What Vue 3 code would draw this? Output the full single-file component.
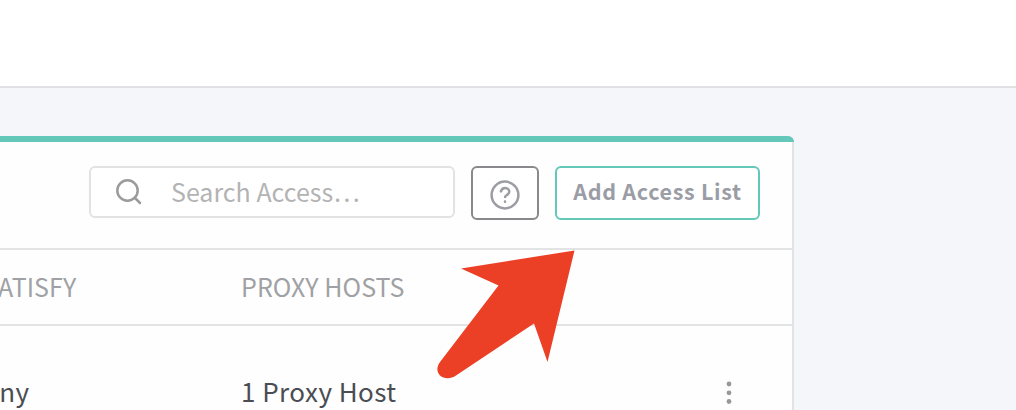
<script setup>
const title = 'Add Access List'
const row = { satisfy: 'Any', hosts: '1 Proxy Host' }
</script>

<template>
  <div class="page">
    <header class="navbar"></header>
    <main class="card">
      <div class="status"></div>
      <div class="toolbar">
        <div class="search">
          <svg class="search-icon" width="26" height="26" viewBox="0 0 26 26">
            <circle cx="11.5" cy="11.5" r="10.2" />
            <path d="M19 19l5 5" />
          </svg>
          <span class="placeholder">Search Access…</span>
        </div>
        <button class="btn help" aria-label="Help">
          <svg width="30" height="30" viewBox="0 0 30 30">
            <circle cx="15" cy="15" r="13.4" />
            <path d="M10.9 11.400c.7-2.4 2.4-3.6 4.4-3.5 2.3.1 4 1.800 4 3.900 0 2.8-4.2 3.300-4.2 5.300" />
            <path d="M15 21.6v.2" />
          </svg>
        </button>
        <button class="btn add">{{ title }}</button>
      </div>
      <div class="row head">
        <div class="cell satisfy"><span>SATISFY</span></div>
        <div class="cell hosts"><span>PROXY HOSTS</span></div>
      </div>
      <div class="row body">
        <div class="cell satisfy"><span>{{ row.satisfy }}</span></div>
        <div class="cell hosts"><span>{{ row.hosts }}</span></div>
        <svg class="more" width="6" height="24" viewBox="0 0 6 24">
          <circle cx="3" cy="3" r="2.4" />
          <circle cx="3" cy="11.800" r="2.4" />
          <circle cx="3" cy="20.500" r="2.4" />
        </svg>
      </div>
    </main>
    <svg class="pointer" width="140" height="132" viewBox="0 0 140 132">
      <path d="M137.500 .5L24 18.500L61.500 35.500L3 112C-.5 117 -.5 122 3 125.500C7 129 14 129 19 125.500L97 73.500L110.500 112Z" />
    </svg>
  </div>
</template>

<style>
body {
  margin: 0;
  overflow: hidden;
}
</style>

<style scoped>
.page {
  position: relative;
  width: 1016px;
  height: 410px;
  overflow: hidden;
  background: #f5f6fa;
  font-family: "Noto Sans CJK SC", "Noto Sans", sans-serif;
  color: #4b4d52;
}
.navbar {
  box-sizing: border-box;
  height: 88px;
  margin-bottom: 48px;
  background: #fff;
  border-bottom: 2px solid #e0e1e4;
}
.card {
  box-sizing: border-box;
  width: 794px;
  height: 300px;
  background: #fefefe;
  border-right: 2px solid #e2e3e5;
  border-top-right-radius: 6px;
}
.status {
  width: 794px;
  height: 6px;
  background: #63c7ba;
  border-top-right-radius: 6px;
}
.toolbar {
  box-sizing: border-box;
  height: 108px;
  padding: 24px 32px 0 0;
  display: flex;
  justify-content: flex-end;
  align-items: flex-start;
  gap: 16px;
  border-bottom: 2px solid #e2e3e5;
}
.search {
  box-sizing: border-box;
  width: 366px;
  height: 52px;
  padding-left: 25px;
  display: flex;
  align-items: center;
  gap: 29px;
  border: 2px solid #e2e2e4;
  border-radius: 6px;
  background: #fff;
}
.search-icon,
.help svg {
  fill: none;
  stroke: #9b9b9d;
  stroke-width: 2.5;
  stroke-linecap: round;
  display: block;
}
.help svg {
  stroke: #9b9da3;
}
.placeholder {
  font-size: 25px;
  line-height: 46px;
  padding-bottom: 2px;
  color: #b3b3b4;
  white-space: nowrap;
}
.btn {
  box-sizing: border-box;
  height: 54px;
  padding: 0;
  display: flex;
  align-items: center;
  justify-content: center;
  background: #fff;
  border-radius: 6px;
  font-family: inherit;
}
.help {
  width: 68px;
  padding-top: 3px;
  border: 2px solid #88898c;
}
.add {
  width: 205px;
  padding-bottom: 4px;
  border: 2px solid #63c7ba;
  color: #9b9da6;
  font-size: 21.500px;
  font-weight: 700;
  letter-spacing: 0.68px;
  line-height: 46px;
  white-space: nowrap;
}
.row {
  box-sizing: border-box;
  display: flex;
  align-items: center;
}
.cell {
  white-space: nowrap;
  font-size: 26px;
  letter-spacing: 0.45px;
}
.satisfy {
  width: 241px;
}
.satisfy span {
  display: block;
  width: max-content;
}
.head {
  height: 76px;
  border-bottom: 2px solid #e2e3e5;
  color: #9fa1a4;
}
.head .cell {
  padding-bottom: 2px;
  font-size: 25px;
  letter-spacing: 0.05px;
}
.head .satisfy span {
  margin-left: -17px;
}
.body {
  height: 134px;
}
.body .cell {
  padding-bottom: 5px;
}
.body .satisfy span {
  margin-left: -17px;
}
.body .hosts {
  width: 485px;
}
.more {
  fill: #98989b;
}
.pointer {
  position: absolute;
  left: 437px;
  top: 250px;
  fill: #eb4026;
}
</style>
